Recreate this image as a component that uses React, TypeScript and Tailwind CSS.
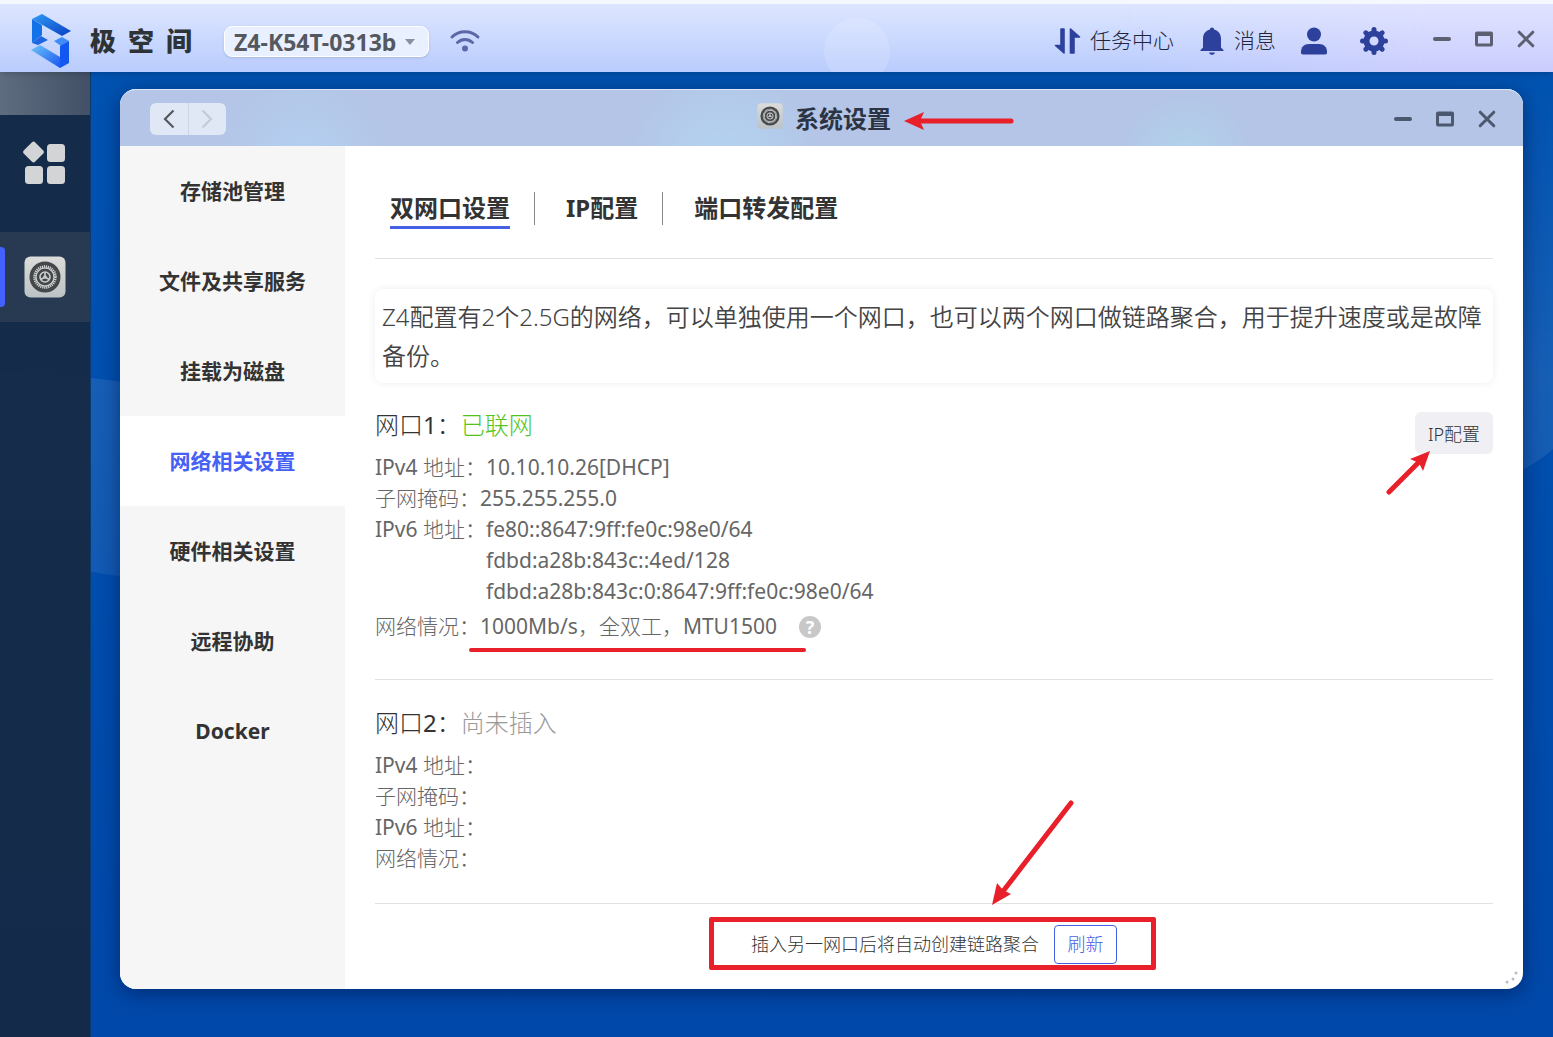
import type { ReactNode } from "react";

const menu = [
  "存储池管理",
  "文件及共享服务",
  "挂载为磁盘",
  "网络相关设置",
  "硬件相关设置",
  "远程协助",
  "Docker",
];

const tabs = ["双网口设置", "IP配置", "端口转发配置"];

const ipv6 = [
  "fe80::8647:9ff:fe0c:98e0/64",
  "fdbd:a28b:843c::4ed/128",
  "fdbd:a28b:843c:0:8647:9ff:fe0c:98e0/64",
];

// regular latin letters next to light chinese ones
const thin = "font-['Noto_Sans','Noto_Sans_CJK_SC_Light','Noto_Sans_CJK_SC',sans-serif] font-normal";

function WindowControls({ className }: { className: string }) {
  return (
    <div className={`flex items-center gap-6 ${className}`}>
      <button aria-label="最小化">
        <svg width="18" height="18" viewBox="0 0 18 18" stroke="currentColor" strokeWidth="4" strokeLinecap="round">
          <path d="M2 9H16" />
        </svg>
      </button>
      <button aria-label="最大化">
        <svg width="18" height="18" viewBox="0 0 18 18" fill="none" stroke="currentColor">
          <rect x="1.5" y="3" width="15" height="12" strokeWidth="3" rx="0.5" />
          <path d="M1 4H17" strokeWidth="4" />
        </svg>
      </button>
      <button aria-label="关闭">
        <svg width="18" height="18" viewBox="0 0 18 18" stroke="currentColor" strokeWidth="3" strokeLinecap="round">
          <path d="M2.2 2.2L15.8 15.8M15.8 2.2L2.2 15.8" />
        </svg>
      </button>
    </div>
  );
}

// round gear on a grey tile, used in the dock and in the title bar
function SettingsIcon({ size }: { size: number }) {
  return (
    <svg width={size} height={size} viewBox="0 0 42 42" fill="none">
      <defs>
        <linearGradient id="tile" x1="0" y1="0" x2="0" y2="1">
          <stop offset="0" stopColor="#dcdcda" />
          <stop offset="1" stopColor="#bcc2c5" />
        </linearGradient>
      </defs>
      <rect x="0.5" y="0.5" width="41" height="41" rx="6" fill="url(#tile)" />
      <circle cx="21" cy="21" r="15.5" fill="#45484b" />
      <circle cx="21" cy="21" r="10.5" stroke="#d5d6d6" strokeWidth="2.5" strokeDasharray="1.2 0.8" />
      <circle cx="21" cy="21" r="9" stroke="#c9cbcb" strokeWidth="1.4" />
      <circle cx="21" cy="21" r="7" stroke="#45484b" strokeWidth="2.4" />
      <circle cx="21" cy="21" r="5" stroke="#c9cbcb" strokeWidth="1.6" />
      <path d="M21 21V16M21 21L16.8 23.5M21 21L25.2 23.5" stroke="#c9cbcb" strokeWidth="1.6" />
      <circle cx="21" cy="21" r="1.8" fill="#c9cbcb" />
    </svg>
  );
}

function Logo() {
  return (
    <svg width="42" height="56" viewBox="0 0 42 56">
      <defs>
        <linearGradient id="lg1" x1="0" y1="0" x2="1" y2="1">
          <stop offset="0" stopColor="#2f9bf5" />
          <stop offset="1" stopColor="#0a3fc4" />
        </linearGradient>
        <linearGradient id="lg2" x1="0" y1="0" x2="1" y2="1">
          <stop offset="0" stopColor="#6cc4f8" />
          <stop offset="1" stopColor="#1a55f0" />
        </linearGradient>
      </defs>
      <path d="M2 6L12 12V22L2 30Z" fill="#1272e8" />
      <path d="M2 6L12 1L41 18L32 23Z" fill="url(#lg1)" />
      <path d="M2 30L11 23L18 27L8 32Z" fill="#2065e0" />
      <path d="M24 28L32 24L39 28L31 33Z" fill="#3f8cf5" />
      <path d="M39 28V50L30 55V33Z" fill="#1257f2" />
      <path d="M1 37L10 32L30 44V55Z" fill="url(#lg2)" />
    </svg>
  );
}

function TopBar() {
  return (
    <header className="relative z-10 flex h-[72px] items-center overflow-hidden border-t-4 border-[#f6f8ff] bg-linear-to-b from-[#dde6ff] to-[#b9ccfd] pt-[6px] pr-[18px] pl-[30px] text-[21px] shadow-md">
      <div className="absolute inset-y-0 right-0 w-[430px] bg-linear-to-b from-[#e0e3ff] to-[#cacdfd] mask-l-from-30%" />
      <div className="absolute top-[14px] left-[824px] h-[66px] w-[66px] rounded-full bg-white/15" />
      <div className="relative flex flex-1 items-center">
        <Logo />
        <span className="ml-[18px] flex gap-3 text-[26px] leading-9 font-black text-[#2d3336]">
          <span>极</span>
          <span>空</span>
          <span>间</span>
        </span>
        <button className="ml-[32px] flex h-[31px] items-center gap-2 rounded-lg border border-white bg-[#e9f0ff] pt-[2px] pr-3 pl-[9px] text-[23px] font-bold text-[#55585f] shadow-sm">
          Z4-K54T-0313b
          <svg width="12" height="6" viewBox="0 0 12 6" fill="#8b919c">
            <path d="M1 0H11L6 6Z" />
          </svg>
        </button>
        <svg className="ml-[20px]" width="32" height="24" viewBox="0 0 32 24" fill="none" stroke="#5c66a8" strokeWidth="3" strokeLinecap="round">
          <path d="M3 8C10 1 22 1 29 8" />
          <path d="M8.500 13.500C13 9.500 19 9.500 23.500 13.500" />
          <circle cx="16" cy="19.500" r="1.500" fill="#5c66a8" />
        </svg>
      </div>
      <nav className="relative flex items-center font-light text-[#22253a]">
        <button className="flex items-center gap-[9px]">
          <svg width="27" height="28" viewBox="0 0 27 28" fill="#2d419c" stroke="#2d419c" strokeLinejoin="round">
            <path d="M10 2V26L1.500 18.500H7V2Z" strokeWidth="1.600" />
            <path d="M16.500 26V2L25.500 10H20V26Z" strokeWidth="1.600" />
          </svg>
          任务中心
        </button>
        <button className="ml-[25px] flex items-center gap-[9px]">
          <svg width="26" height="28" viewBox="0 0 26 28" fill="#2d419c">
            <path d="M13 0.500C14.200 0.500 15 1.300 15 2.400C19.500 3.400 22 7 22 11.500V20.500L24.500 23V24H1.500V23L4 20.500V11.500C4 7 6.500 3.400 11 2.400C11 1.300 11.800 0.500 13 0.500Z" />
            <path d="M10 25.500H16C15.500 27 14.400 27.800 13 27.800C11.600 27.800 10.500 27 10 25.500Z" />
          </svg>
          消息
        </button>
        <button className="ml-[24px]" aria-label="用户">
          <svg width="28" height="28" viewBox="0 0 28 28" fill="#2d419c">
            <circle cx="14" cy="7.500" r="7" />
            <path d="M1 25C1 20 4 17 9 17H19C24 17 27 20 27 25C27 26.800 26.500 27.500 25 27.500H3C1.500 27.500 1 26.800 1 25Z" />
          </svg>
        </button>
        <button className="ml-[32px]" aria-label="设置">
          <svg width="28" height="28" viewBox="0 0 28 28" fill="none" stroke="#2d419c">
            <circle cx="14" cy="14" r="7.500" strokeWidth="6" />
            <path
              d="M14 2.500V5M14 23V25.500M2.500 14H5M23 14H25.500M5.800 5.800L7.600 7.600M20.400 20.400L22.200 22.200M22.200 5.800L20.400 7.600M7.600 20.400L5.800 22.200"
              strokeWidth="5"
              strokeLinecap="round"
            />
          </svg>
        </button>
      </nav>
      <WindowControls className="relative mb-1 ml-[45px] text-[#5c6070]" />
    </header>
  );
}

function Dock() {
  return (
    <aside className="relative flex w-[91px] shrink-0 flex-col border-r border-[#0d3a70] bg-[#152945]/95">
      <div className="h-[43px] bg-linear-to-r from-[#5f6d80] to-[#415066]" />
      <button className="flex h-[96px] items-center justify-center pr-[2px]" aria-label="应用">
        <svg width="44" height="44" viewBox="0 0 44 44" fill="#d3d4d6">
          <rect x="3.500" y="3" width="16" height="16" rx="2.500" transform="rotate(45 11.500 11)" />
          <rect x="25" y="3" width="18" height="18" rx="3.500" />
          <rect x="3" y="25" width="18" height="18" rx="3.500" />
          <rect x="25" y="25" width="18" height="18" rx="3.500" />
        </svg>
      </button>
      <button className="relative mt-[21px] flex h-[90px] items-center justify-center bg-[#273a52]" aria-label="系统设置">
        <span className="absolute left-0 h-[60px] w-[5px] rounded-r bg-[#4261ff]" />
        <SettingsIcon size={42} />
      </button>
    </aside>
  );
}

function Row({ label, children }: { label: string; children?: ReactNode }) {
  return (
    <div className="flex leading-[31px]">
      <dt className="whitespace-pre">{label}：</dt>
      <dd>{children}</dd>
    </div>
  );
}

export default function App() {
  return (
    <div
      lang="zh-CN"
      className="flex min-h-screen flex-col bg-linear-to-b from-[#0053b1] to-[#0048a9] font-['Noto_Sans','Noto_Sans_CJK_SC',sans-serif] text-[#333]"
    >
      <TopBar />
      <div className="relative flex flex-1">
        {/* wallpaper */}
        <svg className="absolute inset-0 h-full w-full" viewBox="0 0 1553 965" preserveAspectRatio="none">
          <defs>
            <linearGradient id="wave" x1="0" y1="0" x2="0" y2="1">
              <stop offset="0" stopColor="#fff" stopOpacity="0" />
              <stop offset="0.6" stopColor="#fff" stopOpacity="0.09" />
              <stop offset="1" stopColor="#fff" stopOpacity="0.07" />
            </linearGradient>
          </defs>
          <path d="M0 300C50 302 90 305 130 311L1500 0H1553V377C1540 388 1530 395 1510 404L130 505C80 500 40 490 0 470Z" fill="url(#wave)" />
        </svg>
        <Dock />
        <section className="relative mt-[17px] mr-[30px] mb-[48px] ml-[29px] flex min-w-0 flex-1 flex-col rounded-2xl bg-white shadow-[0_4px_20px_rgba(0,20,70,0.55)]">
          <div className="grid h-[57px] grid-cols-[1fr_auto_1fr] items-center rounded-t-2xl border-t border-[#dbe6fa] bg-[#b4c5e7] bg-[radial-gradient(circle_at_76%_130%,#b0d4ea_0,transparent_70px),radial-gradient(circle_at_43%_130%,#b3d4f0_0,transparent_100px),radial-gradient(circle_at_13%_130%,#b3d0f0_0,transparent_90px)] pt-[2px] pr-[27px] pl-[30px]">
            <div className="flex h-[32px] w-[76px] rounded-md bg-[#e0e7f5]">
              <button className="flex flex-1 items-center justify-center border-r border-[#ccd5e8]" aria-label="后退">
                <svg width="12" height="20" viewBox="0 0 12 20" fill="none" stroke="#55585f" strokeWidth="2.200">
                  <path d="M10.500 1.500L2 10L10.500 18.500" />
                </svg>
              </button>
              <button className="flex flex-1 items-center justify-center" aria-label="前进">
                <svg width="12" height="20" viewBox="0 0 12 20" fill="none" stroke="#c5cad6" strokeWidth="2.200">
                  <path d="M1.500 1.500L10 10L1.500 18.500" />
                </svg>
              </button>
            </div>
            <div className="relative flex items-center gap-3 pl-[2px]">
              <div className="pb-[6px]">
                <SettingsIcon size={26} />
              </div>
              <h1 className="text-[24px] leading-9 font-bold text-[#2c3444]">系统设置</h1>
              <svg className="absolute left-full mt-1 ml-3" width="112" height="20" viewBox="0 0 112 20" fill="#e8202a">
                <path d="M15 10H108" stroke="#e8202a" strokeWidth="5" strokeLinecap="round" />
                <path d="M1 10L21 1L17 10L21 19Z" />
              </svg>
            </div>
            <WindowControls className="justify-self-end text-[#4c586e]" />
          </div>

          <div className="flex flex-1">
            <nav className="flex w-[225px] shrink-0 flex-col rounded-bl-2xl bg-[#f6f6f6]">
              {menu.map((item) => (
                <a
                  key={item}
                  href="#"
                  className={`flex h-[90px] items-center justify-center pt-[2px] text-[21px] font-bold ${
                    item === "网络相关设置" ? "bg-white text-[#4560f5]" : ""
                  }`}
                >
                  {item}
                </a>
              ))}
            </nav>

            <main className="flex min-w-0 flex-1 flex-col px-[30px]">
              <div className="flex h-[113px] items-center border-b border-[#e2e2e2] pt-[12px] pl-[15px]">
                {tabs.map((tab, i) => (
                  <div key={tab} className="flex items-center">
                    {i > 0 && <span className="mr-[31px] ml-[24px] h-[33px] w-px bg-[#888]" />}
                    <button
                      className={`border-b-3 pt-[2px] text-[24px] leading-9 font-bold ${
                        i === 0 ? "border-[#4560e5]" : "border-transparent"
                      }`}
                    >
                      {tab}
                    </button>
                  </div>
                ))}
              </div>

              <p className="mt-[30px] rounded-lg px-[7px] py-2 text-[24px] leading-[39px] font-[350] text-[#444] shadow-[0_0_8px_rgba(0,0,0,0.07)]">
                Z4配置有2个2.5G的网络，可以单独使用一个网口，也可以两个网口做链路聚合，用于提升速度或是故障备份。
              </p>

              <section className={`border-b border-[#e2e2e2] pt-[21px] pb-[33px] ${thin}`}>
                <div className="mb-[6px] flex h-[42px] items-start justify-between">
                  <h2 className="text-[24px] leading-[42px]">
                    网口1：<span className="text-[#52c41a]">已联网</span>
                  </h2>
                  <div className="relative pt-2">
                    <button className="h-[42px] w-[78px] rounded-md bg-[#f0f0f4] pt-[2px] text-[18px] font-light">IP配置</button>
                    <svg className="absolute top-[46px] -left-[29px]" width="46" height="46" viewBox="0 0 46 46" fill="#e8202a">
                      <path d="M3 42L34 11" stroke="#e8202a" strokeWidth="5" strokeLinecap="round" />
                      <path d="M44 1L37 21L33 13L24 9Z" />
                    </svg>
                  </div>
                </div>
                <dl className="text-[21px] text-[#666]">
                  <Row label="IPv4 地址">10.10.10.26[DHCP]</Row>
                  <Row label="子网掩码">255.255.255.0</Row>
                  <Row label="IPv6 地址">
                    {ipv6.map((ip) => (
                      <div key={ip}>{ip}</div>
                    ))}
                  </Row>
                  <div className="py-1">
                    <Row label="网络情况">
                      <span className="relative inline-flex items-center">
                        1000Mb/s，全双工，MTU1500
                        <button className="ml-[22px] h-[22px] w-[22px] rounded-full bg-[#c8c8c8] text-[18px] leading-[22px] font-bold text-white">
                          ?
                        </button>
                        <span className="absolute top-[37px] right-[15px] -left-[11px] h-[4px] rounded-full bg-[#e8202a]" />
                      </span>
                    </Row>
                  </div>
                </dl>
              </section>

              <section className={`border-b border-[#e2e2e2] pt-[22px] pb-[29px] ${thin}`}>
                <h2 className="mb-[6px] text-[24px] leading-[42px]">
                  网口2：<span className="text-[#999]">尚未插入</span>
                </h2>
                <dl className="text-[21px] text-[#666]">
                  <Row label="IPv4 地址" />
                  <Row label="子网掩码" />
                  <Row label="IPv6 地址" />
                  <Row label="网络情况" />
                </dl>
              </section>

              <footer className="flex justify-center pt-[21px]">
                <div className="relative flex items-center gap-[15px] text-[18px] font-light">
                  插入另一网口后将自动创建链路聚合
                  <button className="h-[39px] w-[63px] rounded border border-[#4560e5] text-[#4560e5]">刷新</button>
                  <span className="pointer-events-none absolute -top-2 -right-[39px] -bottom-[6px] -left-[42px] rounded-xs border-5 border-[#e8202a]" />
                  <svg className="absolute -top-[127px] left-[240px]" width="84" height="108" viewBox="0 0 84 108" fill="#e8202a">
                    <path d="M80 5L13 92" stroke="#e8202a" strokeWidth="5" strokeLinecap="round" />
                    <path d="M1 107L6 85L12 92L20 96Z" />
                  </svg>
                </div>
              </footer>
            </main>
          </div>
          <svg className="absolute right-[4px] bottom-[4px]" width="14" height="14" viewBox="0 0 14 14" fill="#b9bccb">
            <circle cx="11" cy="2" r="1.500" />
            <circle cx="8" cy="8" r="1.500" />
            <circle cx="2" cy="11" r="1.500" />
          </svg>
        </section>
      </div>
    </div>
  );
}
